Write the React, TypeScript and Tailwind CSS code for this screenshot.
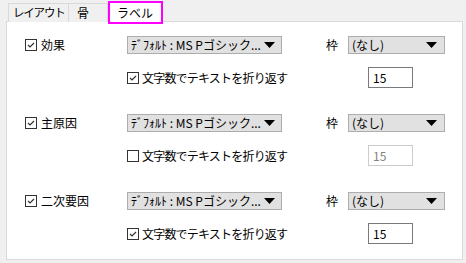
import React from "react";

const font = { fontFamily: '"Noto Sans CJK JP", "Noto Sans", sans-serif' };

function Check({ checked }: { checked: boolean }) {
  return (
    <span className="inline-flex items-center justify-center w-[12px] h-[12px] border border-[#333333] bg-white shrink-0">
      {checked && (
        <svg width="10" height="10" viewBox="0 0 10 10">
          <path d="M2 5 L4 7 L8 3" stroke="#333" strokeWidth="1.2" fill="none" />
        </svg>
      )}
    </span>
  );
}

function Arrow() {
  return (
    <svg width="11" height="6" viewBox="0 0 11 6" className="shrink-0">
      <path d="M0 0 L11 0 L5.5 6 Z" fill="#000" />
    </svg>
  );
}

function Group({ label, wrap, disabled, first }: { label: string; wrap: boolean; disabled?: boolean; first?: boolean }) {
  return (
    <div className={first ? "" : "mt-[26px]"}>
      <div className="flex items-center h-[18px]">
        <div className="flex items-center w-[120px] pl-[18px] gap-[4px]">
          <Check checked />
          <span className="text-[12px] leading-none whitespace-nowrap">{label}</span>
        </div>
        <div className="flex items-center justify-between w-[155px] h-[18px] bg-[#e1e1e1] border border-[#adadad] pl-[3px] pr-[6px]">
          <span className="text-[12px] leading-none whitespace-nowrap">ﾃﾞﾌｫﾙﾄ : MS Pゴシック...</span>
          <Arrow />
        </div>
        <span className="ml-[44px] text-[12px] leading-none w-[22px]">枠</span>
        <div className="flex items-center justify-between w-[97px] h-[18px] bg-[#e1e1e1] border border-[#adadad] pl-[3px] pr-[7px]">
          <span className="text-[12px] leading-none whitespace-nowrap">(なし)</span>
          <Arrow />
        </div>
      </div>
      <div className="flex items-center h-[21px] mt-[13px]">
        <div className="flex items-center ml-[120px] w-[241px] gap-[3px]">
          <Check checked={wrap} />
          <span className="text-[12px] leading-none whitespace-nowrap tracking-[-0.8px]">文字数でテキストを折り返す</span>
        </div>
        <div
          className={
            "flex items-center w-[45px] h-[21px] border bg-white pl-[4px] text-[12px] leading-none " +
            (disabled ? "border-[#cccccc] text-[#838383]" : "border-[#7a7a7a] text-black")
          }
        >
          15
        </div>
      </div>
    </div>
  );
}

export default function App() {
  return (
    <div className="w-[466px] h-[263px] bg-[#f0f0f0] relative text-black" style={font}>
      <div className="flex items-end h-[22px] pl-[8px]">
        <div className="h-[19px] w-[61px] border border-[#d9d9d9] border-b-0 bg-[#f0f0f0] flex items-center pl-[4px] text-[11.5px] leading-none whitespace-nowrap tracking-[-1.2px] overflow-hidden">
          レイアウト
        </div>
        <div className="h-[19px] w-[39px] border border-[#d9d9d9] border-l-0 border-b-0 bg-[#f0f0f0] flex items-center pl-[8px] text-[12px] leading-none">
          骨
        </div>
      </div>
      <div className="absolute left-[108px] top-[1px] w-[55px] h-[23px] border-2 border-[#ff00ff] bg-white z-10 flex items-center pl-[7px] text-[12px] leading-none whitespace-nowrap">
        ラベル
      </div>
      <div className="ml-[6px] -mt-[1px] w-[457px] h-[239px] bg-white border border-[#d9d9d9] pt-[14px]">
        <Group label="効果" wrap first />
        <Group label="主原因" wrap={false} disabled />
        <Group label="二次要因" wrap />
      </div>
    </div>
  );
}
